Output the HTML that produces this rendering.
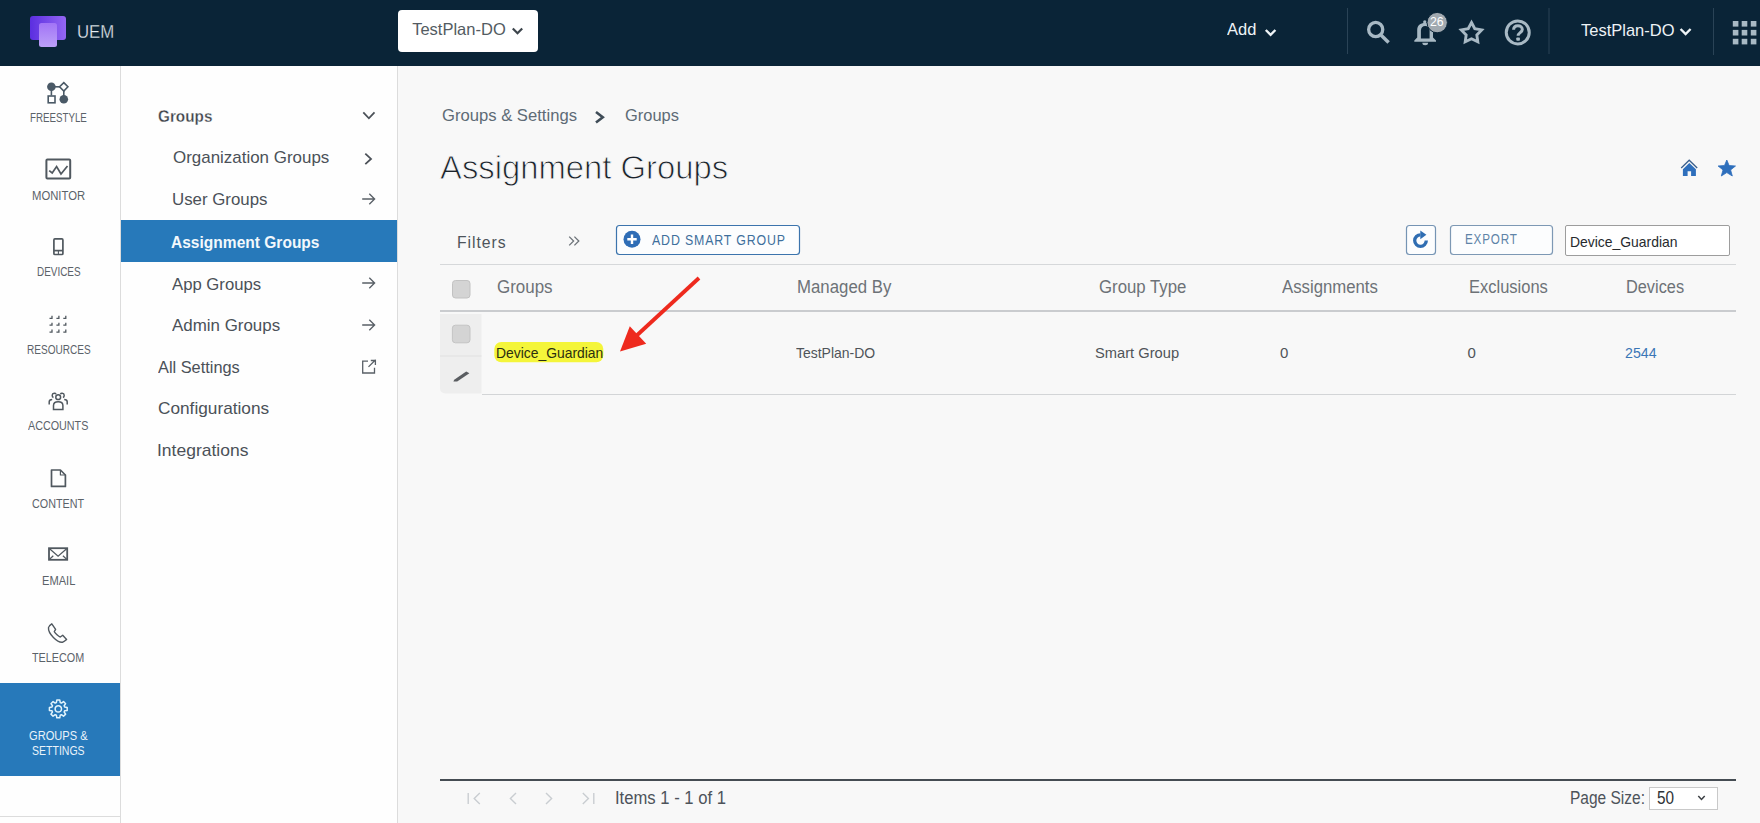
<!DOCTYPE html>
<html><head><meta charset="utf-8"><title>Assignment Groups</title>
<style>
html,body{-webkit-font-smoothing:antialiased;margin:0;padding:0;width:1760px;height:823px;overflow:hidden;background:#f8f8f8;font-family:"Liberation Sans", sans-serif;}
.t{position:absolute;line-height:1;white-space:nowrap;transform-origin:0 0;}
.a{position:absolute;}
svg{position:absolute;overflow:visible;}
</style></head><body>
<!-- header -->
<div class="a" style="left:0;top:0;width:1760px;height:66px;background:#0a2437"></div>
<svg style="left:0;top:0" width="120" height="66">
  <defs>
    <linearGradient id="lg1" x1="0" y1="0" x2="1" y2="0"><stop offset="0" stop-color="#5b2ee0"/><stop offset="1" stop-color="#9466f3"/></linearGradient>
    <linearGradient id="lg2" x1="0" y1="0" x2="0" y2="1"><stop offset="0" stop-color="#a274f6"/><stop offset="1" stop-color="#bca0f8"/></linearGradient>
  </defs>
  <rect x="30" y="16" width="36" height="24" rx="3" fill="url(#lg1)"/>
  <rect x="39" y="23" width="18" height="24" rx="2.5" fill="url(#lg2)"/>
</svg>
<div class="a" style="left:398px;top:10px;width:140px;height:42px;background:#fff;border-radius:4px"></div>
<svg style="left:0;top:0" width="1760" height="66">
  <polyline points="512.8,28.5 517.5,33.3 522.2,28.5" fill="none" stroke="#3d454c" stroke-width="2.2"/>
  <polyline points="1265.8,30 1270.6,34.8 1275.4,30" fill="none" stroke="#eef3f6" stroke-width="2.4"/>
  <polyline points="1680.6,29 1685.6,34 1690.6,29" fill="none" stroke="#eef3f6" stroke-width="2.4"/>
  <line x1="1347.5" y1="8" x2="1347.5" y2="54" stroke="#2a4356" stroke-width="1"/>
  <line x1="1549" y1="8" x2="1549" y2="54" stroke="#2a4356" stroke-width="1"/>
  <line x1="1713.5" y1="8" x2="1713.5" y2="55" stroke="#2a4356" stroke-width="1"/>
  <!-- search -->
  <circle cx="1375.7" cy="29.5" r="7.05" fill="none" stroke="#a8b9c4" stroke-width="3.3"/>
  <line x1="1381.2" y1="35.2" x2="1388.6" y2="42.5" stroke="#a8b9c4" stroke-width="3.5"/>
  <!-- bell -->
  <path d="M1414.3,41.7 L1436,41.7 L1436,40.5 L1433,37.5 L1433,30 C1433,25.5 1430,23 1425.1,23 C1420.2,23 1417.2,25.5 1417.2,30 L1417.2,37.5 L1414.3,40.5 Z" fill="#a8b9c4"/>
  <path d="M1420.9,38.6 L1429.6,38.6 L1429.6,30.5 C1429.6,27.8 1427.8,26 1425.2,26 C1422.6,26 1420.9,27.8 1420.9,30.5 Z" fill="#0a2437"/>
  <path d="M1422.3,42.8 a2.9,2.5 0 0 0 5.8,0 z" fill="#a8b9c4"/>
  <circle cx="1424.8" cy="22" r="1.7" fill="#a8b9c4"/>
  <circle cx="1437.2" cy="22.6" r="10.2" fill="#a1a9b0" stroke="#0a2437" stroke-width="1"/>
  <!-- star outline -->
  <path d="M1471.50,22.50 L1474.79,28.67 L1481.68,29.89 L1476.83,34.93 L1477.79,41.86 L1471.50,38.80 L1465.21,41.86 L1466.17,34.93 L1461.32,29.89 L1468.21,28.67 Z" fill="none" stroke="#a8b9c4" stroke-width="2.9" stroke-linejoin="miter" stroke-miterlimit="10"/>
  <!-- help -->
  <circle cx="1517.75" cy="32.4" r="11.5" fill="none" stroke="#a8b9c4" stroke-width="3"/>
  <path d="M1513.6,29.8 C1513.6,27.2 1515.4,25.7 1517.9,25.7 C1520.6,25.7 1522.3,27.4 1522.3,29.5 C1522.3,32.4 1518.1,32.9 1518.1,35.8" fill="none" stroke="#a8b9c4" stroke-width="3"/>
  <rect x="1516.3" y="37.4" width="3.6" height="3.3" rx="0.8" fill="#a8b9c4"/>
  <!-- grid -->
  <g fill="#a8b9c4">
    <rect x="1732.8" y="21" width="5.6" height="5.6"/><rect x="1741.7" y="21" width="5.6" height="5.6"/><rect x="1750.8" y="21" width="5.6" height="5.6"/>
    <rect x="1732.8" y="29.9" width="5.6" height="5.6"/><rect x="1741.7" y="29.9" width="5.6" height="5.6"/><rect x="1750.8" y="29.9" width="5.6" height="5.6"/>
    <rect x="1732.8" y="38.8" width="5.6" height="5.6"/><rect x="1741.7" y="38.8" width="5.6" height="5.6"/><rect x="1750.8" y="38.8" width="5.6" height="5.6"/>
  </g>
</svg>

<!-- sidebar -->
<div class="a" style="left:0;top:66px;width:120px;height:757px;background:#fefefe;border-right:1px solid #dcdcdc"></div>
<div class="a" style="left:0;top:683px;width:120px;height:93px;background:#2779ba"></div>
<div class="a" style="left:0;top:816px;width:120px;height:1px;background:#dcdcdc"></div>
<svg style="left:0;top:66px" width="120" height="757">
 <g transform="translate(0,-66)">
  <!-- freestyle -->
  <g fill="#4a5966" stroke="#4a5966">
    <line x1="51.4" y1="86.8" x2="60" y2="86.8" stroke-width="1.6"/>
    <line x1="51.4" y1="86.8" x2="51.4" y2="95.5" stroke-width="1.6"/>
    <line x1="63.8" y1="90" x2="63.8" y2="96" stroke-width="1.6"/>
    <circle cx="51.4" cy="86.8" r="4.3" stroke="none"/>
    <circle cx="63.8" cy="99.2" r="4.3" stroke="none"/>
    <rect x="48.2" y="96" width="6.8" height="6.8" fill="none" stroke-width="1.6"/>
    <path d="M63.8,82.6 L67.9,86.8 L63.8,91 L59.6,86.8 Z" fill="none" stroke-width="1.6"/>
  </g>
  <!-- monitor -->
  <g fill="none" stroke="#50585f" stroke-width="2">
    <rect x="46.4" y="159.6" width="23.8" height="19" rx="1"/>
    <polyline points="49.2,170.6 52.2,173 56.6,166.5 61,174 67.5,166" stroke-width="1.7"/>
  </g>
  <!-- devices -->
  <g fill="none" stroke="#50585f" stroke-width="1.7">
    <rect x="53.9" y="238.9" width="9" height="15.6" rx="1"/>
    <line x1="53.9" y1="250.6" x2="62.9" y2="250.6"/>
    <line x1="58.4" y1="250.6" x2="58.4" y2="254.5" stroke-width="1.1"/>
  </g>
  <!-- resources -->
  <g fill="none" stroke="#50585f" stroke-width="1.3">
    <path d="M49.5,318.3 H52 V315.8 M56.4,318.3 H58.9 V315.8 M63.3,318.3 H65.8 V315.8"/>
    <path d="M49.5,325.2 H52 V322.7 M56.4,325.2 H58.9 V322.7 M63.3,325.2 H65.8 V322.7"/>
    <path d="M49.5,332.1 H52 V329.6 M56.4,332.1 H58.9 V329.6 M63.3,332.1 H65.8 V329.6"/>
  </g>
  <!-- accounts -->
  <g fill="none" stroke="#50585f" stroke-width="1.5">
    <circle cx="58.2" cy="397.2" r="2.4"/>
    <path d="M53.5,409.5 V405.5 C53.5,403.2 55.3,401.8 58.2,401.8 C61.1,401.8 62.9,403.2 62.9,405.5 V409.5 Z"/>
    <path d="M53.5,397.5 C51.8,397 51.5,393.5 54.2,393.3 C55.3,393.2 55.8,393.8 56,394.3"/>
    <path d="M62.9,397.5 C64.6,397 64.9,393.5 62.2,393.3 C61.1,393.2 60.6,393.8 60.4,394.3"/>
    <path d="M49.2,404.5 V401.8 C49.2,400.2 50.5,399.4 52.2,399.4"/>
    <path d="M67.2,404.5 V401.8 C67.2,400.2 65.9,399.4 64.2,399.4"/>
  </g>
  <!-- content -->
  <g fill="none" stroke="#50585f" stroke-width="1.7" stroke-linejoin="round">
    <path d="M51.5,470 H60.4 L65.4,475 V486.4 H51.5 Z"/>
    <path d="M60.4,470 V475 H65.4" stroke-width="1.2"/>
  </g>
  <!-- email -->
  <g fill="none" stroke="#50585f" stroke-width="1.8">
    <rect x="49" y="548.2" width="18.2" height="11.6"/>
    <polyline points="49.3,548.5 58.1,556.2 66.9,548.5" stroke-width="1.3"/>
    <line x1="49.3" y1="559.5" x2="53.3" y2="555.8" stroke-width="1.2"/>
    <line x1="66.9" y1="559.5" x2="62.9" y2="555.8" stroke-width="1.2"/>
  </g>
  <!-- telecom -->
  <path d="M51.8,623.8 C50.5,624.6 48.8,625.8 48.5,627.5 C48.2,630.5 50.6,634.6 53.4,637.5 C56.2,640.3 59.8,642.6 62.5,642.2 C64,642 65.4,640.6 66.6,639.5 L62.7,635.3 L60.3,637 C58.5,636.5 55.3,633.3 54.3,631.6 L55.6,629.4 Z" fill="none" stroke="#50585f" stroke-width="1.4" stroke-linejoin="round"/>
  <!-- gear -->
  <g transform="translate(58.3,708.9)" fill="none" stroke="#e2f4fc" stroke-width="1.5">
    <circle r="3.2"/>
    <path d="M-1.93,-6.31 L-1.49,-8.88 L1.49,-8.88 L1.93,-6.31 L3.10,-5.83 L5.23,-7.33 L7.33,-5.23 L5.83,-3.10 L6.31,-1.93 L8.88,-1.49 L8.88,1.49 L6.31,1.93 L5.83,3.10 L7.33,5.23 L5.23,7.33 L3.10,5.83 L1.93,6.31 L1.49,8.88 L-1.49,8.88 L-1.93,6.31 L-3.10,5.83 L-5.23,7.33 L-7.33,5.23 L-5.83,3.10 L-6.31,1.93 L-8.88,1.49 L-8.88,-1.49 L-6.31,-1.93 L-5.83,-3.10 L-7.33,-5.23 L-5.23,-7.33 L-3.10,-5.83 Z" stroke-linejoin="round"/>
  </g>
 </g>
</svg>

<!-- secondary nav -->
<div class="a" style="left:121px;top:66px;width:276px;height:757px;background:#fefefe;border-right:1px solid #dcdcdc"></div>
<div class="a" style="left:121px;top:220px;width:276px;height:42px;background:#2779ba"></div>
<svg style="left:0;top:0" width="400" height="500">
  <g fill="none" stroke="#4b5158" stroke-width="1.8">
    <polyline points="363.3,112.4 368.9,118.3 374.5,112.4"/>
    <polyline points="365.3,153.6 371,158.9 365.3,164.2"/>
    <g stroke-width="1.35" stroke="#596067">
      <path d="M362.2,199 H374.6 M369.3,193.8 L374.6,199 L369.3,204.2"/>
      <path d="M362.2,283 H374.6 M369.3,277.8 L374.6,283 L369.3,288.2"/>
      <path d="M362.2,325 H374.6 M369.3,319.8 L374.6,325 L369.3,330.2"/>
    </g>
    <g stroke-width="1.3" stroke="#596067">
      <path d="M368,361.2 H362.7 V373 H374.5 V367.7"/>
      <path d="M368.5,366.9 L375.6,359.8 M370.8,360.5 H375.4 V365.1"/>
    </g>
  </g>
</svg>

<!-- main -->
<svg style="left:0;top:0" width="1760" height="823">
  <polyline points="596,112 602.8,117.2 596,122.5" fill="none" stroke="#3f4c57" stroke-width="2.6"/>
  <!-- home -->
  <g fill="#2e6fbc">
    <polyline points="1681.2,168 1689.2,160.2 1697.2,168" fill="none" stroke="#3a5f8c" stroke-width="1.3"/>
    <path d="M1689.3,163 L1695.9,169.3 V176 H1691.1 V171.2 H1687.6 V176 H1682.9 V169.3 Z"/>
  </g>
  <path d="M1726.8,160 L1729.1,165.5 L1735.5,166 L1730.6,169.9 L1732.3,176 L1726.8,172.6 L1721.3,176 L1723,169.9 L1718.1,166 L1724.5,165.5 Z" fill="#2e6fbc" stroke="#2e6fbc" stroke-width="0.8" stroke-linejoin="round"/>
  <!-- filters >> -->
  <g fill="none" stroke="#6d7379" stroke-width="1.3">
    <polyline points="569.2,236.6 573.6,241 569.2,245.4"/>
    <polyline points="574.4,236.6 578.8,241 574.4,245.4"/>
  </g>
  <!-- add smart group -->
  <rect x="616.5" y="225.5" width="183" height="29" rx="3" fill="#fcfdfe" stroke="#3c74ad" stroke-width="1.2"/>
  <circle cx="632" cy="239.2" r="8.5" fill="#2f6db6"/>
  <path d="M627.3,239.2 H636.7 M632,234.5 V243.9" stroke="#fff" stroke-width="2.4"/>
  <!-- refresh -->
  <rect x="1406.5" y="225.5" width="29" height="29" rx="3" fill="#fcfdfe" stroke="#7594b4" stroke-width="1.2"/>
  <path d="M1426.3,240.6 A5.8,5.8 0 1 1 1420.5,234.8" fill="none" stroke="#2f6db2" stroke-width="3.3"/>
  <path d="M1420.3,230.4 L1420.3,239.2 L1426.4,234.8 Z" fill="#2f6db2"/>
  <!-- export -->
  <rect x="1450.5" y="225.5" width="102" height="29" rx="3" fill="#fcfdfe" stroke="#7d98b4" stroke-width="1.2"/>
  <!-- input -->
  <rect x="1565.5" y="225.5" width="164" height="30" rx="1.5" fill="#fff" stroke="#9d9d9d" stroke-width="1"/>
  <line x1="440" y1="264.5" x2="1736" y2="264.5" stroke="#d6d8da" stroke-width="1"/>
  <!-- header checkbox -->
  <rect x="452.5" y="280.5" width="17.5" height="17.5" rx="3" fill="#d4d4d4" stroke="#c2c2c2" stroke-width="1"/>
  <rect x="440" y="310" width="1296" height="2" fill="#cacccf"/>
  <!-- row left cell -->
  <path d="M440,314 H481.5 V393.5 H445 A5,5 0 0 1 440,388.5 Z" fill="#eeeeee"/>
  <line x1="440" y1="356" x2="481.5" y2="356" stroke="#e0e0e0" stroke-width="1.2"/>
  <rect x="452.4" y="325.2" width="17.6" height="17.6" rx="3" fill="#d4d4d4" stroke="#c4c4c4" stroke-width="1"/>
  <path d="M454.2,379.8 L466.2,371.4 L469.4,373.3 L457.2,381.4 L453.4,381.6 Z" fill="#5a5d61"/>
  <line x1="482" y1="394.5" x2="1736" y2="394.5" stroke="#d3d5d7" stroke-width="1"/>
  <!-- highlight -->
  <rect x="494.3" y="342" width="109" height="20.3" rx="7" fill="#f4f53a"/>
  <!-- footer -->
  <rect x="440" y="779" width="1296" height="2" fill="#454c53"/>
  <g fill="none" stroke="#c9cdd1" stroke-width="1.4">
    <path d="M468.2,793 V804 M479.8,793 L474.2,798.5 L479.8,804"/>
    <polyline points="516,793 510.4,798.5 516,804"/>
    <polyline points="546,793 551.6,798.5 546,804"/>
    <path d="M593.8,793 V804 M582.8,793 L588.4,798.5 L582.8,804"/>
  </g>
  <rect x="1649.5" y="787.5" width="68" height="22" fill="#fff" stroke="#c9c9c9" stroke-width="1"/>
  <polyline points="1698.3,796 1701.5,799.4 1704.7,796" fill="none" stroke="#3b3f43" stroke-width="1.5"/>
  <!-- red arrow -->
  <line x1="699" y1="278" x2="634" y2="338" stroke="#ee2a1e" stroke-width="3.8"/>
  <path d="M620,351.5 L629.8,326.3 L646.2,343.7 Z" fill="#ee2a1e"/>
</svg>

<div class='t' style='left:76.69px;top:22.54px;font-size:18.5px;font-weight:400;color:#e4ecf1;letter-spacing:0px;transform:scaleX(0.9050);-webkit-text-stroke:0.3px #0a2437;'>UEM</div>
<div class='t' style='left:412.20px;top:20.83px;font-size:16.5px;font-weight:400;color:#535b62;letter-spacing:0px;'>TestPlan-DO</div>
<div class='t' style='left:1226.80px;top:21.41px;font-size:17px;font-weight:400;color:#eef3f6;letter-spacing:0px;transform:scaleX(0.9700);'>Add</div>
<div class='t' style='left:1430.00px;top:16.02px;font-size:12.5px;font-weight:400;color:#ffffff;letter-spacing:0px;transform:scaleX(0.9857);'>26</div>
<div class='t' style='left:1580.50px;top:21.61px;font-size:17px;font-weight:400;color:#eef3f6;letter-spacing:0px;transform:scaleX(0.9698);'>TestPlan-DO</div>
<div class='t' style='left:29.80px;top:112.12px;font-size:12.5px;font-weight:400;color:#5b6269;letter-spacing:0px;transform:scaleX(0.7795);'>FREESTYLE</div>
<div class='t' style='left:31.90px;top:189.72px;font-size:12.5px;font-weight:400;color:#5b6269;letter-spacing:0px;transform:scaleX(0.9034);'>MONITOR</div>
<div class='t' style='left:36.70px;top:266.22px;font-size:12.5px;font-weight:400;color:#5b6269;letter-spacing:0px;transform:scaleX(0.7945);'>DEVICES</div>
<div class='t' style='left:26.50px;top:344.02px;font-size:12.5px;font-weight:400;color:#5b6269;letter-spacing:0px;transform:scaleX(0.8038);'>RESOURCES</div>
<div class='t' style='left:27.90px;top:420.12px;font-size:12.5px;font-weight:400;color:#5b6269;letter-spacing:0px;transform:scaleX(0.8600);'>ACCOUNTS</div>
<div class='t' style='left:31.90px;top:497.92px;font-size:12.5px;font-weight:400;color:#5b6269;letter-spacing:0px;transform:scaleX(0.8607);'>CONTENT</div>
<div class='t' style='left:42.10px;top:575.22px;font-size:12.5px;font-weight:400;color:#5b6269;letter-spacing:0px;transform:scaleX(0.8892);'>EMAIL</div>
<div class='t' style='left:32.30px;top:652.12px;font-size:12.5px;font-weight:400;color:#5b6269;letter-spacing:0px;transform:scaleX(0.8633);'>TELECOM</div>
<div class='t' style='left:28.80px;top:730.02px;font-size:12.5px;font-weight:400;color:#eaf3fa;letter-spacing:0px;transform:scaleX(0.8879);'>GROUPS &amp;</div>
<div class='t' style='left:31.60px;top:745.32px;font-size:12.5px;font-weight:400;color:#eaf3fa;letter-spacing:0px;transform:scaleX(0.8413);'>SETTINGS</div>
<div class='t' style='left:158.30px;top:107.73px;font-size:16.5px;font-weight:700;color:#3d434a;letter-spacing:0px;transform:scaleX(0.9271);-webkit-text-stroke:0.3px #fefefe;'>Groups</div>
<div class='t' style='left:172.50px;top:148.91px;font-size:17px;font-weight:400;color:#4b5158;letter-spacing:0px;transform:scaleX(0.9962);'>Organization Groups</div>
<div class='t' style='left:171.51px;top:190.51px;font-size:17px;font-weight:400;color:#4b5158;letter-spacing:0px;transform:scaleX(0.9905);'>User Groups</div>
<div class='t' style='left:171.40px;top:233.53px;font-size:16.5px;font-weight:700;color:#f2f8fc;letter-spacing:0px;transform:scaleX(0.9418);'>Assignment Groups</div>
<div class='t' style='left:172.30px;top:275.51px;font-size:17px;font-weight:400;color:#4b5158;letter-spacing:0px;transform:scaleX(0.9824);'>App Groups</div>
<div class='t' style='left:172.30px;top:317.11px;font-size:17px;font-weight:400;color:#4b5158;letter-spacing:0px;transform:scaleX(0.9954);'>Admin Groups</div>
<div class='t' style='left:158.30px;top:358.61px;font-size:17px;font-weight:400;color:#4b5158;letter-spacing:0px;transform:scaleX(0.9612);'>All Settings</div>
<div class='t' style='left:158.30px;top:400.01px;font-size:17px;font-weight:400;color:#4b5158;letter-spacing:0px;transform:scaleX(1.0138);'>Configurations</div>
<div class='t' style='left:157.27px;top:442.11px;font-size:17px;font-weight:400;color:#4b5158;letter-spacing:0px;transform:scaleX(1.0295);'>Integrations</div>
<div class='t' style='left:441.90px;top:107.21px;font-size:17px;font-weight:400;color:#5e6b76;letter-spacing:0px;transform:scaleX(0.9783);'>Groups &amp; Settings</div>
<div class='t' style='left:625.00px;top:107.21px;font-size:17px;font-weight:400;color:#5e6b76;letter-spacing:0px;transform:scaleX(0.9679);'>Groups</div>
<div class='t' style='left:439.90px;top:150.97px;font-size:33px;font-weight:400;color:#1b232b;letter-spacing:0px;transform:scaleX(0.9945);-webkit-text-stroke:0.9px #f8f8f8;'>Assignment Groups</div>
<div class='t' style='left:456.55px;top:234.23px;font-size:16.5px;font-weight:400;color:#4d545b;letter-spacing:1px;transform:scaleX(0.9540);'>Filters</div>
<div class='t' style='left:651.80px;top:232.53px;font-size:14.5px;font-weight:400;color:#3e6f9c;letter-spacing:1px;transform:scaleX(0.8526);'>ADD SMART GROUP</div>
<div class='t' style='left:1465.30px;top:232.43px;font-size:14.5px;font-weight:400;color:#5f84a8;letter-spacing:1px;transform:scaleX(0.8047);'>EXPORT</div>
<div class='t' style='left:1570.40px;top:234.10px;font-size:15px;font-weight:400;color:#262a2e;letter-spacing:0px;transform:scaleX(0.9276);'>Device_Guardian</div>
<div class='t' style='left:497.30px;top:279.19px;font-size:17.5px;font-weight:400;color:#6d7277;letter-spacing:0px;transform:scaleX(0.9684);'>Groups</div>
<div class='t' style='left:796.74px;top:279.19px;font-size:17.5px;font-weight:400;color:#6d7277;letter-spacing:0px;transform:scaleX(0.9602);'>Managed By</div>
<div class='t' style='left:1099.00px;top:279.19px;font-size:17.5px;font-weight:400;color:#6d7277;letter-spacing:0px;transform:scaleX(0.9593);'>Group Type</div>
<div class='t' style='left:1282.20px;top:279.19px;font-size:17.5px;font-weight:400;color:#6d7277;letter-spacing:0px;transform:scaleX(0.9570);'>Assignments</div>
<div class='t' style='left:1469.26px;top:279.19px;font-size:17.5px;font-weight:400;color:#6d7277;letter-spacing:0px;transform:scaleX(0.9422);'>Exclusions</div>
<div class='t' style='left:1626.07px;top:279.19px;font-size:17.5px;font-weight:400;color:#6d7277;letter-spacing:0px;transform:scaleX(0.9328);'>Devices</div>
<div class='t' style='left:495.60px;top:344.60px;font-size:15px;font-weight:400;color:#2b2f10;letter-spacing:0px;transform:scaleX(0.9259);'>Device_Guardian</div>
<div class='t' style='left:795.80px;top:345.00px;font-size:15px;font-weight:400;color:#4f5459;letter-spacing:0px;transform:scaleX(0.9306);'>TestPlan-DO</div>
<div class='t' style='left:1095.32px;top:345.00px;font-size:15px;font-weight:400;color:#4f5459;letter-spacing:0px;transform:scaleX(0.9788);'>Smart Group</div>
<div class='t' style='left:1279.90px;top:345.00px;font-size:15px;font-weight:400;color:#4f5459;letter-spacing:0px;'>0</div>
<div class='t' style='left:1467.40px;top:345.00px;font-size:15px;font-weight:400;color:#4f5459;letter-spacing:0px;'>0</div>
<div class='t' style='left:1624.50px;top:345.00px;font-size:15px;font-weight:400;color:#3a76b6;letter-spacing:0px;transform:scaleX(0.9455);'>2544</div>
<div class='t' style='left:615.05px;top:789.99px;font-size:17.5px;font-weight:400;color:#4d535a;letter-spacing:0px;transform:scaleX(0.9504);'>Items 1 - 1 of 1</div>
<div class='t' style='left:1569.71px;top:789.94px;font-size:17.5px;font-weight:400;color:#4d535a;letter-spacing:0px;transform:scaleX(0.8855);'>Page Size:</div>
<div class='t' style='left:1656.90px;top:789.94px;font-size:17.5px;font-weight:400;color:#2e3236;letter-spacing:0px;transform:scaleX(0.8750);'>50</div>
</body></html>
